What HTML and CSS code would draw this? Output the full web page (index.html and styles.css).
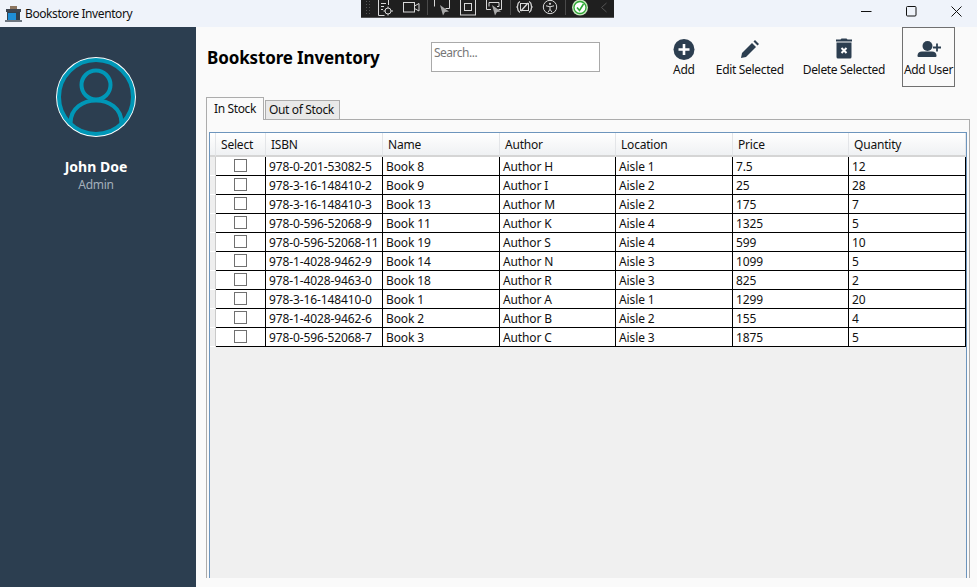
FILE: index.html

```html
<!DOCTYPE html>
<html lang="en">
<head>
    <meta charset="UTF-8">
    <meta name="viewport" content="width=device-width, initial-scale=1.0">
    <title>Bookstore Inventory</title>
    <link rel="stylesheet" href="styles.css">
</head>
<body>
    <!-- Window title bar -->
    <div class="titlebar">
        <svg class="app-icon" width="18" height="18" viewBox="0 0 18 18">
            <rect x="6" y="1" width="7" height="4" fill="#8d7660"/>
            <rect x="2" y="4" width="15" height="3" fill="#3f4650"/>
            <rect x="3" y="7" width="13" height="9" fill="#33414f"/>
            <rect x="4" y="8" width="8" height="7" fill="#1f8fd8"/>
            <rect x="1" y="15" width="17" height="2" fill="#6d7680"/>
        </svg>
        <span class="app-title">Bookstore Inventory</span>
        <div class="window-controls">
            <svg width="11" height="11" viewBox="0 0 11 11"><path d="M0 5.500H10.500" stroke="#111" fill="none"/></svg>
            <svg width="11" height="11" viewBox="0 0 11 11"><rect x="0.500" y="0.500" width="9.500" height="9.500" rx="1" stroke="#111" fill="none"/></svg>
            <svg width="11" height="11" viewBox="0 0 11 11"><path d="M0.500 0.500L10.500 10.500M10.500 0.500L0.500 10.500" stroke="#111" fill="none"/></svg>
        </div>
    </div>

    <!-- Debug toolbar floating over the title bar -->
    <div class="debug-bar">
        <svg width="252" height="17" viewBox="0 0 252 17" fill="none" stroke="#d8d8d8">
            <!-- grip -->
            <path d="M5.500 1v15M8.500 1v15" stroke="#555" stroke-dasharray="1 2"/>
            <!-- file with gear -->
            <path d="M17.500 0v15.500h6M27.500 0v5M20 3.500h5M20 6.500h3M20 9.500h2"/>
            <circle cx="27" cy="11" r="3"/>
            <path d="M27 6.500v1.500M27 14v1.500M22.500 11h1.500M30 11h2"/>
            <!-- camera -->
            <rect x="42.500" y="2.500" width="11" height="9.500"/>
            <path d="M53.500 6l4.500-2.500v7.500l-4.500-2.500"/>
            <path d="M66.500 0v15" stroke="#4a4a4a"/>
            <!-- select element -->
            <path d="M73.500 0v6.500M88.500 0v8.500h-4"/>
            <path d="M79 5l9 6.500-4 .5-2 3.500z" fill="#a8a8a8" stroke="none"/>
            <!-- layout box -->
            <rect x="99.500" y="-1" width="15" height="16"/>
            <rect x="103.500" y="3.500" width="7" height="7"/>
            <!-- preview selection -->
            <path d="M130 9.500h-4.500v-11h15v11h-3M128 6.500v-4h10v4h-2"/>
            <path d="M131 5l9 6.500-4 .5-2 3.500z" fill="#a8a8a8" stroke="none"/>
            <path d="M149.500 0v15" stroke="#4a4a4a"/>
            <!-- binding failures -->
            <path d="M159 1.500c-4 2-1 4-3 5.500 2 1.500-1 3.500 3 5.500M168 1.500c4 2 1 4 3 5.500-2 1.500 1 3.500-3 5.500" stroke-width="1.300"/>
            <rect x="159.500" y="3.500" width="8" height="7" stroke-width="1"/>
            <path d="M160 11l7-8" stroke-width="1.300"/>
            <!-- accessibility -->
            <circle cx="189" cy="7" r="6.700"/>
            <circle cx="189" cy="3.800" r="1.100" fill="#d8d8d8" stroke="none"/>
            <path d="M185 5.800l4 1 4-1M189 6.800v2.500l-2 3M189 9.300l2 3"/>
            <path d="M204.500 0v15" stroke="#4a4a4a"/>
            <!-- status -->
            <circle cx="219" cy="7.500" r="8" fill="#c7e6bd" stroke="none"/>
            <circle cx="219" cy="7.500" r="6" fill="#fff" stroke="#2ea836" stroke-width="1.300"/>
            <path d="M216 7.500l2.500 3 4-6.500" stroke="#2ea836" stroke-width="1.600"/>
            <path d="M245.500 3l-5 4.500 5 4.500" stroke="#555"/>
        </svg>
    </div>

    <div class="app">
        <!-- Sidebar with the logged in user -->
        <div class="sidebar">
            <svg class="avatar" width="82" height="82" viewBox="0 0 82 82">
                <circle cx="41" cy="41" r="40" fill="#fff"/>
                <circle cx="41" cy="41" r="37" fill="#2c3e50" stroke="#0097b7" stroke-width="4"/>
                <circle cx="41" cy="29" r="14.500" fill="none" stroke="#0097b7" stroke-width="4"/>
                <path d="M15.500 67c0-30 51-30 51 0" fill="none" stroke="#0097b7" stroke-width="4"/>
            </svg>
            <div class="user-name">John Doe</div>
            <div class="user-role">Admin</div>
        </div>

        <div class="main">
            <!-- Title, search and actions -->
            <div class="toolbar">
                <h1 class="page-title">Bookstore Inventory</h1>
                <div class="search">Search...</div>
                <div class="actions">
                    <div class="action action-add">
                        <svg width="22" height="22" viewBox="0 0 22 22">
                            <circle cx="11" cy="11.500" r="10.500" fill="#2c3e50"/>
                            <path d="M11 6v11M5.500 11.500h11" stroke="#fff" stroke-width="2.600"/>
                        </svg>
                        <span>Add</span>
                    </div>
                    <div class="action action-edit">
                        <svg width="22" height="22" viewBox="-2 -2 22 22">
                            <path d="M0 18l1-5L11 3l4 4L5 17z" fill="#2c3e50"/>
                            <path d="M12.500 1.500L14 0l4 4-1.500 1.500z" fill="#2c3e50"/>
                        </svg>
                        <span>Edit Selected</span>
                    </div>
                    <div class="action action-delete">
                        <svg width="22" height="22" viewBox="0 0 22 22">
                            <path d="M3 1.500h4.500l1-1h5l1 1H19v2H3z" fill="#2c3e50"/>
                            <path d="M3.500 4.500h15v14.500a1.500 1.500 0 0 1-1.500 1.500H5A1.500 1.500 0 0 1 3.500 19z" fill="#2c3e50"/>
                            <path d="M8.500 10l5 5M13.500 10l-5 5" stroke="#fff" stroke-width="2"/>
                        </svg>
                        <span>Delete Selected</span>
                    </div>
                    <div class="action action-user">
                        <svg width="24" height="22" viewBox="0 0 24 22">
                            <circle cx="10.500" cy="8" r="5" fill="#2c3e50"/>
                            <path d="M0.500 17.500c0-2.500 2-4 4.500-4h10c2.500 0 4.500 1.500 4.500 4v0.500a1 1 0 0 1-1 1h-17a1 1 0 0 1-1-1z" fill="#2c3e50"/>
                            <path d="M20 5.500v8M16 9.500h8" stroke="#2c3e50" stroke-width="1.800"/>
                        </svg>
                        <span>Add User</span>
                    </div>
                </div>
            </div>

            <!-- Stock tabs -->
            <div class="tabs">
                <div class="tab tab-active">In Stock</div>
                <div class="tab">Out of Stock</div>
            </div>

            <div class="tab-panel">
                <div class="grid">
                    <table class="books">
                        <colgroup>
                            <col class="col-gutter">
                            <col class="col-select">
                            <col class="col-isbn">
                            <col class="col-name">
                            <col class="col-author">
                            <col class="col-location">
                            <col class="col-price">
                            <col class="col-quantity">
                        </colgroup>
                        <thead>
                            <tr>
                                <th></th>
                                <th>Select</th>
                                <th>ISBN</th>
                                <th>Name</th>
                                <th>Author</th>
                                <th>Location</th>
                                <th>Price</th>
                                <th>Quantity</th>
                            </tr>
                        </thead>
                        <tbody>
                            <tr><td class="gutter"></td><td class="check-cell"><span class="check"></span></td><td>978-0-201-53082-5</td><td>Book 8</td><td>Author H</td><td>Aisle 1</td><td>7.5</td><td>12</td></tr>
                            <tr><td class="gutter"></td><td class="check-cell"><span class="check"></span></td><td>978-3-16-148410-2</td><td>Book 9</td><td>Author I</td><td>Aisle 2</td><td>25</td><td>28</td></tr>
                            <tr><td class="gutter"></td><td class="check-cell"><span class="check"></span></td><td>978-3-16-148410-3</td><td>Book 13</td><td>Author M</td><td>Aisle 2</td><td>175</td><td>7</td></tr>
                            <tr><td class="gutter"></td><td class="check-cell"><span class="check"></span></td><td>978-0-596-52068-9</td><td>Book 11</td><td>Author K</td><td>Aisle 4</td><td>1325</td><td>5</td></tr>
                            <tr><td class="gutter"></td><td class="check-cell"><span class="check"></span></td><td>978-0-596-52068-11</td><td>Book 19</td><td>Author S</td><td>Aisle 4</td><td>599</td><td>10</td></tr>
                            <tr><td class="gutter"></td><td class="check-cell"><span class="check"></span></td><td>978-1-4028-9462-9</td><td>Book 14</td><td>Author N</td><td>Aisle 3</td><td>1099</td><td>5</td></tr>
                            <tr><td class="gutter"></td><td class="check-cell"><span class="check"></span></td><td>978-1-4028-9463-0</td><td>Book 18</td><td>Author R</td><td>Aisle 3</td><td>825</td><td>2</td></tr>
                            <tr><td class="gutter"></td><td class="check-cell"><span class="check"></span></td><td>978-3-16-148410-0</td><td>Book 1</td><td>Author A</td><td>Aisle 1</td><td>1299</td><td>20</td></tr>
                            <tr><td class="gutter"></td><td class="check-cell"><span class="check"></span></td><td>978-1-4028-9462-6</td><td>Book 2</td><td>Author B</td><td>Aisle 2</td><td>155</td><td>4</td></tr>
                            <tr><td class="gutter"></td><td class="check-cell"><span class="check"></span></td><td>978-0-596-52068-7</td><td>Book 3</td><td>Author C</td><td>Aisle 3</td><td>1875</td><td>5</td></tr>
                        </tbody>
                    </table>
                </div>
            </div>
        </div>
    </div>
</body>
</html>
```

FILE: styles.css

```css
/* Basic styles for the page */
* {
    box-sizing: border-box;
}

html, body {
    height: 100%;
}

body {
    margin: 0;
    overflow: hidden;
    font-family: "Noto Sans", "Open Sans", sans-serif;
    font-size: 12px;
    color: #111;
    background-color: #fafafa;
}

/* Title bar */
.titlebar {
    display: flex;
    align-items: center;
    height: 27px;
    padding-left: 4px;
    background-color: #eff3fa;
}

.app-icon {
    margin-right: 3px;
}

.app-title {
    font-size: 12px;
    letter-spacing: -0.42px;
}

.window-controls {
    display: flex;
    gap: 34px;
    margin-left: auto;
    margin-right: 15px;
    margin-top: -5px;
}

.debug-bar {
    position: absolute;
    top: 0;
    left: 361px;
    width: 253px;
    height: 18px;
    background-color: #1f1f1f;
    border-bottom: 1px solid #555;
}

.debug-bar svg {
    display: block;
}

/* Layout */
.app {
    display: flex;
    height: 560px;
}

.sidebar {
    display: flex;
    flex-direction: column;
    align-items: center;
    width: 196px;
    padding: 29px 4px 0 0;
    background-color: #2c3e50;
}

.user-name {
    margin-top: 19px;
    font-size: 14px;
    font-weight: bold;
    line-height: 19px;
    color: #fff;
}

.user-role {
    line-height: 17px;
    letter-spacing: -0.3px;
    color: #a3afbb;
}

.main {
    flex: 1;
    padding: 0 7px 9px 10px;
    display: flex;
    flex-direction: column;
}

/* Toolbar */
.toolbar {
    display: flex;
    height: 70px;
    padding-right: 15px;
}

.page-title {
    width: 224px;
    margin: 19px 0 0 1px;
    font-size: 17px;
    line-height: 24px;
    font-weight: bold;
    letter-spacing: -0.14px;
    color: #000;
}

.search {
    width: 169px;
    height: 30px;
    margin-top: 15px;
    padding: 1px 2px;
    border: 1px solid #a9a9a9;
    background-color: #fff;
    letter-spacing: -0.5px;
    color: #777;
}

.actions {
    display: flex;
    margin-left: auto;
}

.action {
    display: flex;
    flex-direction: column;
    align-items: center;
    padding-top: 11px;
    gap: 1px;
    letter-spacing: -0.32px;
    color: #111;
}

.action span {
    line-height: 17px;
    white-space: nowrap;
}

.action-edit {
    margin-left: 21px;
}

.action-delete {
    margin-left: 19px;
}

.action-user {
    width: 53px;
    height: 60px;
    margin-left: 17px;
    border: 1px solid #707070;
    padding-top: 10px;
}

/* Tabs */
.tabs {
    display: flex;
    align-items: flex-end;
    height: 22px;
    position: relative;
    z-index: 1;
    letter-spacing: -0.35px;
}

.tab {
    height: 19px;
    margin-left: 1px;
    padding: 0 5px 0 3px;
    line-height: 18px;
    border: 1px solid #acacac;
    border-bottom: 0;
    background-color: #e9e9e9;
}

.tab-active {
    height: 23px;
    width: 58px;
    margin-left: 0;
    margin-bottom: -1px;
    padding: 0;
    text-align: center;
    line-height: 21px;
    background-color: #fafafa;
}

.tab-panel {
    flex: 1;
    min-height: 0;
    padding: 12px 2px 0 2px;
    border: 1px solid #acacac;
    border-bottom: 0;
    background-color: #fafafa;
}

/* Data grid */
.grid {
    height: 100%;
    border: 1px solid #6d95bd;
    border-bottom: 0;
    background-color: #f0f0f0;
}

.books {
    width: 756px;
    table-layout: fixed;
    border-collapse: separate;
    border-spacing: 0;
}

.col-gutter { width: 6px; }
.col-select { width: 50px; }
.col-isbn { width: 117px; }
.col-name { width: 117px; }
.col-author { width: 116px; }
.col-location { width: 117px; }
.col-price { width: 116px; }
.col-quantity { width: 117px; }

.books th {
    height: 24px;
    padding: 1px 0 0 5px;
    font-weight: normal;
    text-align: left;
    letter-spacing: -0.2px;
    border-right: 1px solid #e3e5e8;
    border-bottom: 2px solid #d5d5d5;
    background: linear-gradient(#ffffff, #f7f8f9 50%, #eff1f3);
}

.books td {
    height: 19px;
    padding: 0 0 0 3px;
    line-height: 17px;
    white-space: nowrap;
    overflow: hidden;
    letter-spacing: -0.12px;
    border-right: 1px solid #000;
    border-bottom: 1px solid #000;
    background-color: #fff;
}

.books td.gutter {
    padding: 0;
    border-right: 1px solid #c9c9c9;
    border-bottom: 1px solid #fff;
    background-color: #eeeeee;
}

.books td.check-cell {
    padding: 0 0 0 18px;
}

.check {
    display: block;
    width: 13px;
    height: 13px;
    margin-top: -2px;
    border: 1px solid #707070;
    background-color: #fff;
}
```
